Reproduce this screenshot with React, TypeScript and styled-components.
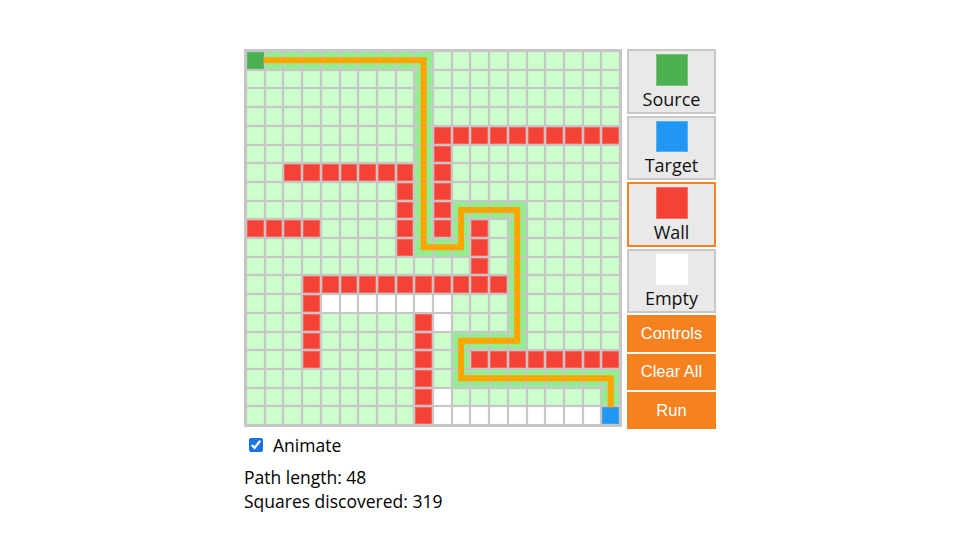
import React from "react";
import styled, { createGlobalStyle } from "styled-components";

const GlobalStyle = createGlobalStyle`
  html, body { margin: 0; padding: 0; background: #ffffff; }
  body { font-family: "Open Sans", "Noto Sans", sans-serif; color: #000; }
`;

type CellType = "v" | "p" | "w" | "e" | "s" | "t";

const N = 20;
const PITCH = 18.7;
const OFFSET = 3;
const CELL = 16.7;

const pathPoints: [number, number][] = [
  [0, 0], [9, 0], [9, 10], [11, 10], [11, 8], [14, 8], [14, 15], [11, 15], [11, 17], [19, 17], [19, 19],
];

function buildGrid(): CellType[][] {
  const g: CellType[][] = Array.from({ length: N }, () => Array.from({ length: N }, () => "v" as CellType));
  const setRow = (r: number, c0: number, c1: number, t: CellType) => {
    for (let c = c0; c <= c1; c++) g[r][c] = t;
  };
  const setCol = (c: number, r0: number, r1: number, t: CellType) => {
    for (let r = r0; r <= r1; r++) g[r][c] = t;
  };
  for (let i = 0; i < pathPoints.length - 1; i++) {
    const [c0, r0] = pathPoints[i];
    const [c1, r1] = pathPoints[i + 1];
    if (r0 === r1) setRow(r0, Math.min(c0, c1), Math.max(c0, c1), "p");
    else setCol(c0, Math.min(r0, r1), Math.max(r0, r1), "p");
  }
  setRow(4, 10, 19, "w");
  setCol(10, 5, 9, "w");
  setRow(6, 2, 8, "w");
  setCol(8, 7, 10, "w");
  setRow(9, 0, 3, "w");
  setCol(12, 9, 11, "w");
  setRow(12, 3, 13, "w");
  setCol(3, 13, 16, "w");
  setCol(9, 14, 19, "w");
  setRow(16, 12, 19, "w");
  setRow(13, 4, 10, "e");
  g[14][10] = "e";
  g[18][10] = "e";
  setRow(19, 10, 18, "e");
  g[0][0] = "s";
  g[19][19] = "t";
  return g;
}

const grid = buildGrid();

const cellColors: Record<CellType, { bg: string; border: string }> = {
  v: { bg: "#ccffcc", border: "#c9f7c9" },
  p: { bg: "#90ee90", border: "#98ec98" },
  w: { bg: "#f44336", border: "#f5675c" },
  e: { bg: "#ffffff", border: "#fafafa" },
  s: { bg: "#4caf50", border: "#5cb860" },
  t: { bg: "#2196f3", border: "#3aa2f3" },
};

const Page = styled.div`
  width: 472px;
  margin: 0 auto;
  padding-top: 49px;
`;

const TopRow = styled.div`
  display: flex;
  gap: 5px;
  align-items: flex-start;
`;

const BoardWrap = styled.div`
  position: relative;
  width: 378px;
  height: 378px;
`;

const Board = styled.div`
  box-sizing: border-box;
  width: 378px;
  height: 378px;
  border: 2px solid #c6c6c6;
  background: #c6c6c6;
  padding: 1px;
  display: grid;
  grid-template-columns: repeat(20, 1fr);
  grid-template-rows: repeat(20, 1fr);
  gap: 2px;
`;

const Cell = styled.div<{ $t: CellType }>`
  box-sizing: border-box;
  background: ${(p) => cellColors[p.$t].bg};
  border: 1px solid ${(p) => cellColors[p.$t].border};
`;

const Overlay = styled.svg`
  position: absolute;
  inset: 0;
  pointer-events: none;
`;

const Panel = styled.div`
  width: 89px;
  display: flex;
  flex-direction: column;
  gap: 2px;
`;

const ToolButton = styled.div<{ $active?: boolean }>`
  box-sizing: border-box;
  height: 64.5px;
  background: #e9e9e9;
  border: 2px solid ${(p) => (p.$active ? "#f5821f" : "#c8c8c8")};
  display: flex;
  flex-direction: column;
  align-items: center;
  padding-top: 3px;
  font-family: "Open Sans", "Noto Sans", sans-serif;
  font-size: 18px;
  line-height: 26px;
  color: #111;
`;

const Swatch = styled.div<{ $color: string }>`
  width: 32px;
  height: 32px;
  box-sizing: border-box;
  background: ${(p) => p.$color};
  border: 1px solid rgba(255, 255, 255, 0.25);
`;

const ActionButton = styled.div`
  height: 36.5px;
  background: #f5821f;
  color: #ffffff;
  display: flex;
  align-items: center;
  justify-content: center;
  font-family: "Liberation Sans", Arial, sans-serif;
  font-size: 16.5px;
`;

const CheckRow = styled.label`
  display: flex;
  align-items: center;
  margin-top: 6px;
  margin-left: 5px;
  font-size: 17.5px;
  height: 20px;
`;

const Check = styled.input`
  width: 14px;
  height: 14px;
  margin: 0 10px 0 0;
  accent-color: #1a73e8;
`;

const Stats = styled.div`
  margin-top: 10px;
  font-size: 17.5px;
  line-height: 24.5px;
`;

const center = (i: number) => OFFSET + CELL / 2 + PITCH * i;

export default function App() {
  const pts = pathPoints.map(([c, r], i) => {
    let x = center(c);
    let y = center(r);
    if (i === 0) x = OFFSET + CELL;
    if (i === pathPoints.length - 1) y = OFFSET + PITCH * r;
    return `${x},${y}`;
  });

  const tools = [
    { label: "Source", color: "#4caf50" },
    { label: "Target", color: "#2196f3" },
    { label: "Wall", color: "#f44336", active: true },
    { label: "Empty", color: "#ffffff" },
  ];

  return (
    <>
      <GlobalStyle />
      <Page>
        <TopRow>
          <BoardWrap>
            <Board>
              {grid.flatMap((row, r) => row.map((t, c) => <Cell key={`${r}-${c}`} $t={t} />))}
            </Board>
            <Overlay width={378} height={378} viewBox="0 0 378 378">
              <polyline
                points={pts.join(" ")}
                fill="none"
                stroke="#ffa500"
                strokeWidth={6}
                strokeLinejoin="miter"
                strokeLinecap="butt"
              />
            </Overlay>
          </BoardWrap>
          <Panel>
            {tools.map((t) => (
              <ToolButton key={t.label} $active={t.active}>
                <Swatch $color={t.color} />
                {t.label}
              </ToolButton>
            ))}
            <ActionButton>Controls</ActionButton>
            <ActionButton>Clear All</ActionButton>
            <ActionButton>Run</ActionButton>
          </Panel>
        </TopRow>
        <CheckRow>
          <Check type="checkbox" defaultChecked />
          Animate
        </CheckRow>
        <Stats>
          <div>Path length: 48</div>
          <div>Squares discovered: 319</div>
        </Stats>
      </Page>
    </>
  );
}
